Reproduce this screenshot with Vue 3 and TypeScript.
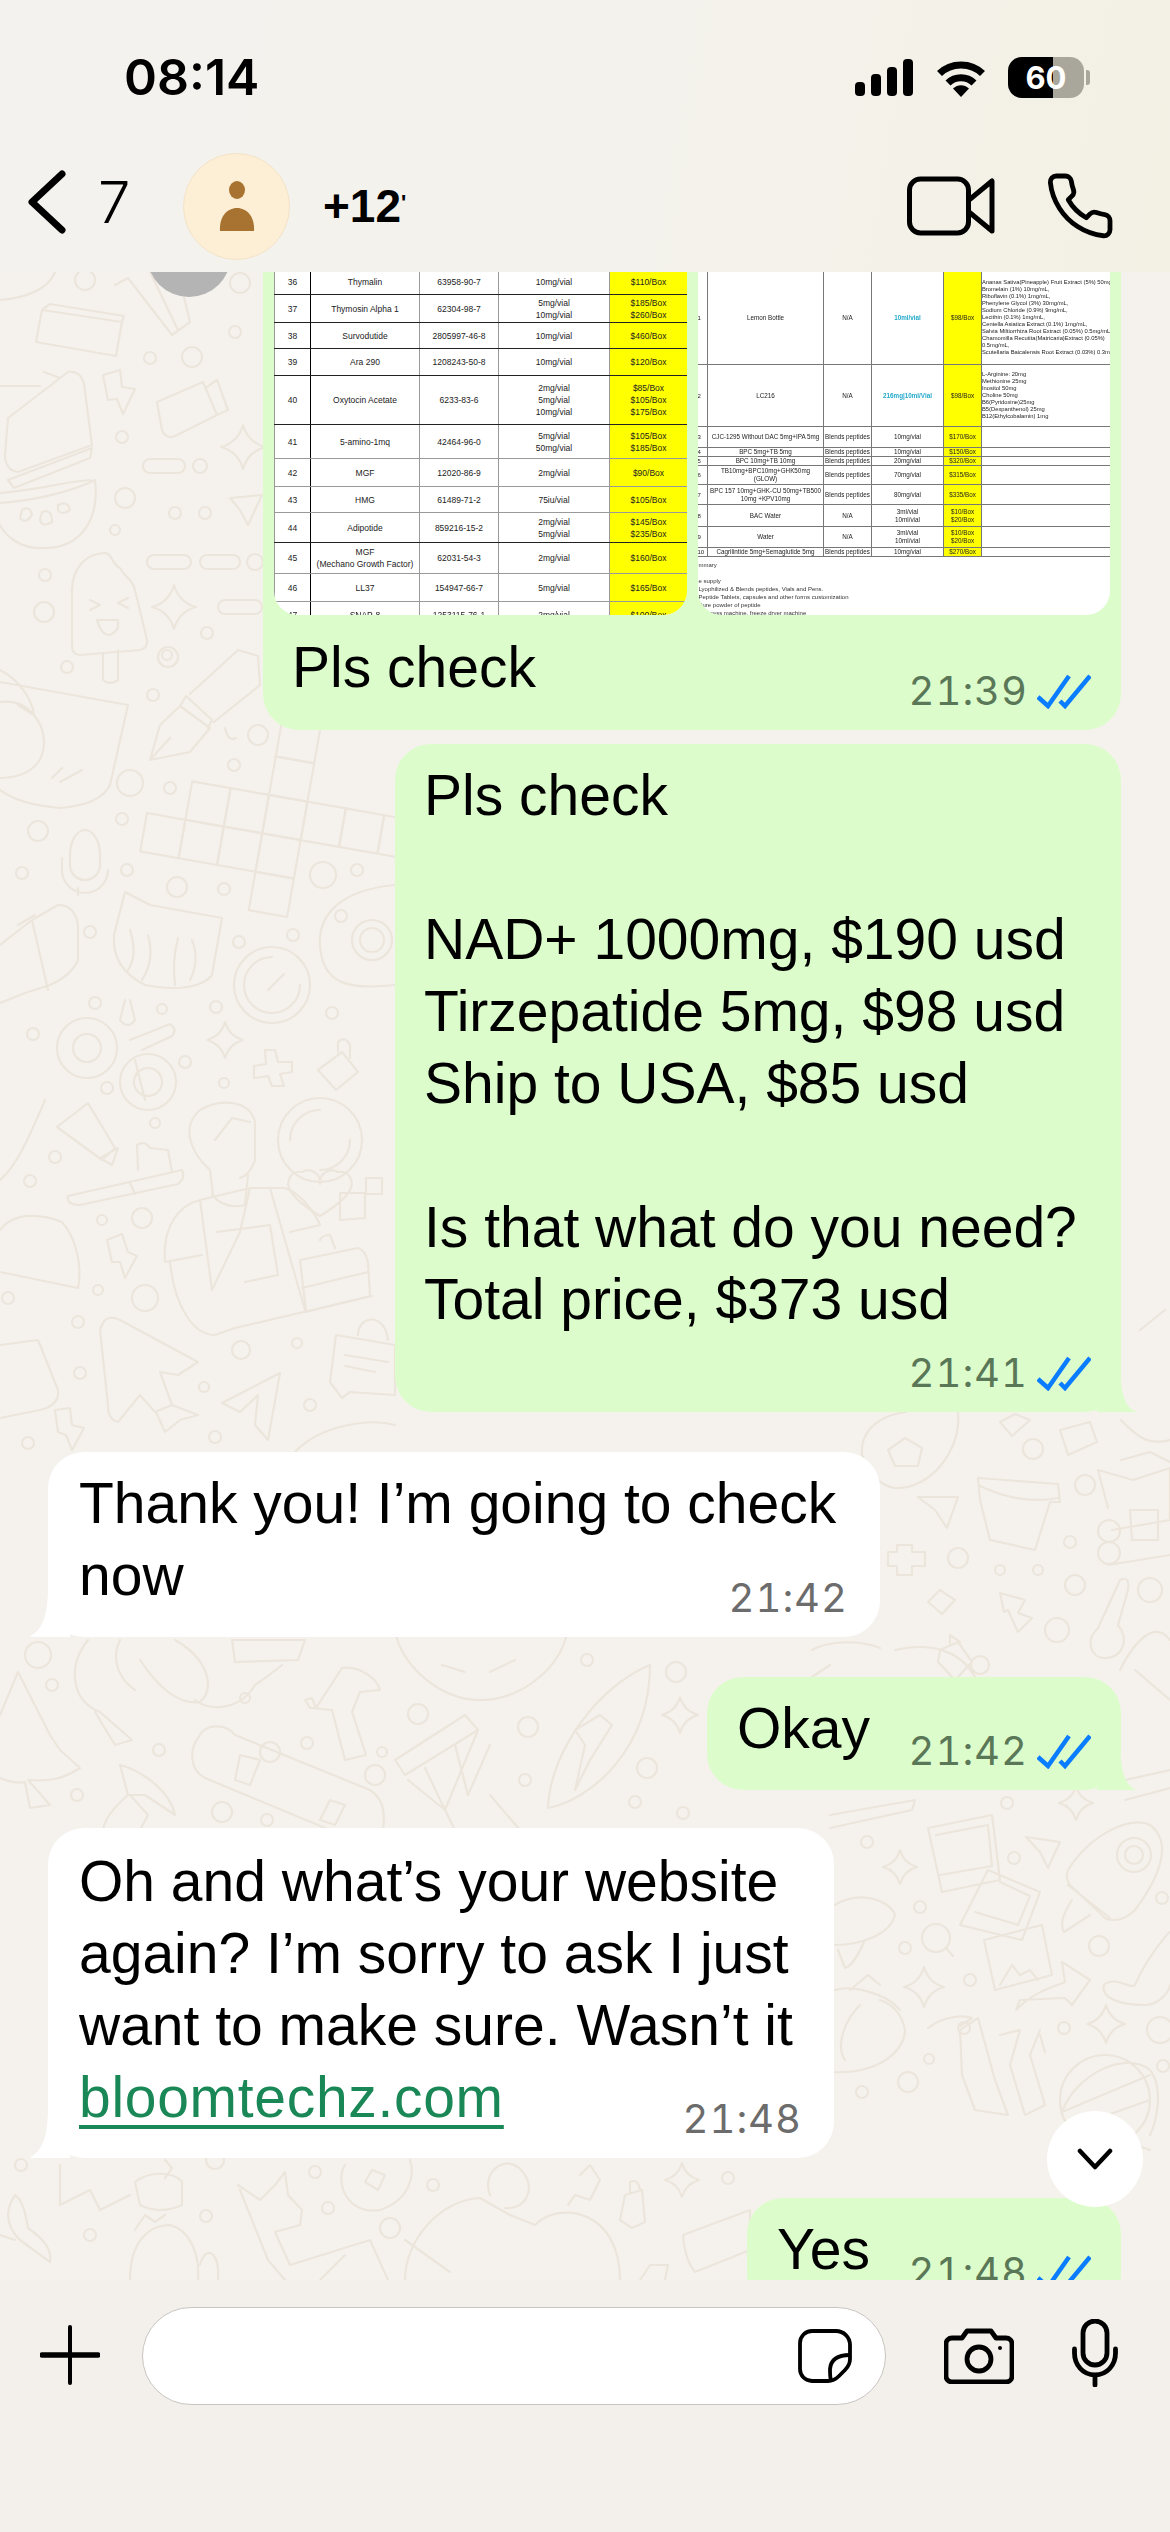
<script setup lang="ts">
interface PriceRow {
  no: string;
  name: string[];
  cas: string;
  spec: string[];
  price: string[];
  h: number;
  strong?: boolean;
}

interface BlendRow {
  no: string;
  name: string[];
  type: string;
  spec: string[];
  price: string[];
  note: string[];
  h: number;
  cyan?: boolean;
}

const leftRows: PriceRow[] = [
  { no: '36', name: ['Thymalin'], cas: '63958-90-7', spec: ['10mg/vial'], price: ['$110/Box'], h: 26, strong: true },
  { no: '37', name: ['Thymosin Alpha 1'], cas: '62304-98-7', spec: ['5mg/vial', '10mg/vial'], price: ['$185/Box', '$260/Box'], h: 28, strong: true },
  { no: '38', name: ['Survodutide'], cas: '2805997-46-8', spec: ['10mg/vial'], price: ['$460/Box'], h: 26, strong: true },
  { no: '39', name: ['Ara 290'], cas: '1208243-50-8', spec: ['10mg/vial'], price: ['$120/Box'], h: 27, strong: true },
  { no: '40', name: ['Oxytocin Acetate'], cas: '6233-83-6', spec: ['2mg/vial', '5mg/vial', '10mg/vial'], price: ['$85/Box', '$105/Box', '$175/Box'], h: 49, strong: true },
  { no: '41', name: ['5-amino-1mq'], cas: '42464-96-0', spec: ['5mg/vial', '50mg/vial'], price: ['$105/Box', '$185/Box'], h: 34 },
  { no: '42', name: ['MGF'], cas: '12020-86-9', spec: ['2mg/vial'], price: ['$90/Box'], h: 28 },
  { no: '43', name: ['HMG'], cas: '61489-71-2', spec: ['75iu/vial'], price: ['$105/Box'], h: 26 },
  { no: '44', name: ['Adipotide'], cas: '859216-15-2', spec: ['2mg/vial', '5mg/vial'], price: ['$145/Box', '$235/Box'], h: 30, strong: true },
  { no: '45', name: ['MGF', '(Mechano Growth Factor)'], cas: '62031-54-3', spec: ['2mg/vial'], price: ['$160/Box'], h: 31 },
  { no: '46', name: ['LL37'], cas: '154947-66-7', spec: ['5mg/vial'], price: ['$165/Box'], h: 28 },
  { no: '47', name: ['SNAP-8'], cas: '1253115-76-1', spec: ['2mg/vial'], price: ['$100/Box'], h: 26 }
];

const rightRows: BlendRow[] = [
  {
    no: '1', name: ['Lemon  Bottle'], type: 'N/A', spec: ['10ml/vial'], price: ['$98/Box'], h: 94, cyan: true,
    note: ['Ananas Sativa(Pineapple) Fruit Extract (5%) 50mg/ml,', 'Bromelain (1%) 10mg/mL,', 'Riboflavin (0.1%) 1mg/mL,', 'Phenylene Glycol (3%) 30mg/mL,', 'Sodium Chloride (0.9%) 9mg/mL,', 'Lecithin (0.1%) 1mg/mL,', 'Centella Asiatica Extract (0.1%) 1mg/mL,', 'Salvia Miltiorrhiza Root Extract (0.05%) 0.5mg/mL,', 'Chamomilla Recutita(Matricaria)Extract (0.05%)', '0.5mg/mL,', 'Scutellaria Baicalensis Root Extract (0.03%) 0.3mg/ml']
  },
  {
    no: '2', name: ['LC216'], type: 'N/A', spec: ['216mg|10ml/Vial'], price: ['$98/Box'], h: 62, cyan: true,
    note: ['L-Arginine: 20mg', 'Methionine 25mg', 'Inositol 50mg', 'Choline 50mg', 'B6(Pyridoxine)25mg', 'B5(Dexpanthenol) 25mg', 'B12(Ethylcobalamin) 1mg']
  },
  { no: '3', name: ['CJC-1295 Without DAC 5mg+IPA 5mg'], type: 'Blends peptides', spec: ['10mg/vial'], price: ['$170/Box'], note: [], h: 21 },
  { no: '4', name: ['BPC 5mg+TB 5mg'], type: 'Blends peptides', spec: ['10mg/vial'], price: ['$150/Box'], note: [], h: 8 },
  { no: '5', name: ['BPC 10mg+TB 10mg'], type: 'Blends peptides', spec: ['20mg/vial'], price: ['$320/Box'], note: [], h: 8 },
  { no: '6', name: ['TB10mg+BPC10mg+GHK50mg', '(GLOW)'], type: 'Blends peptides', spec: ['70mg/vial'], price: ['$315/Box'], note: [], h: 19 },
  { no: '7', name: ['BPC 157 10mg+GHK-CU 50mg+TB500', '10mg +KPV10mg'], type: 'Blends peptides', spec: ['80mg/vial'], price: ['$335/Box'], note: [], h: 20 },
  { no: '8', name: ['BAC Water'], type: 'N/A', spec: ['3ml/vial', '10ml/vial'], price: ['$10/Box', '$20/Box'], note: [], h: 22 },
  { no: '9', name: ['Water'], type: 'N/A', spec: ['3ml/vial', '10ml/vial'], price: ['$10/Box', '$20/Box'], note: [], h: 21 },
  { no: '10', name: ['Cagrilintide 5mg+Semaglutide 5mg'], type: 'Blends peptides', spec: ['10mg/vial'], price: ['$270/Box'], note: [], h: 8 }
];

const summary = [
  'mmary',
  '',
  'e supply',
  'Lyophilized & Blends peptides, Vials and Pens.',
  'Peptide Tablets, capsules and other forms customization',
  'Pure powder of peptide',
  '   * press machine, freeze dryer machine'
];

const star = (x: number, y: number, r: number) => {
  const c = r * 0.22;
  return `M${x} ${y - r}Q${x + c} ${y - c} ${x + r} ${y}Q${x + c} ${y + c} ${x} ${y + r}Q${x - c} ${y + c} ${x - r} ${y}Q${x - c} ${y - c} ${x} ${y - r}Z`;
};

const pill = (x: number, y: number, w: number, h: number) => {
  const r = h / 2;
  return `M${x + r} ${y}H${x + w - r}a${r} ${r} 0 0 1 0 ${h}H${x + r}a${r} ${r} 0 0 1 0 ${-h}Z`;
};

// crossword squares, in column / row steps
const crossCells = [[1, -1], [2, -1], [3, -1], [4, -1], [5, -1], [6, -1], [0, 0], [1, 0], [2, 0], [3, 0], [3, 1], [3, -2], [3, -3]];

const doodles: string[] = [
  // top left column
  'M0 300C25 298 48 290 55 272',
  'M115 285L128 278L172 335L190 322L178 272M150 272L178 330',
  'M42 310L122 322L116 356L36 342ZM42 310L50 304L124 316L122 322',
  'M8 418L68 372Q80 370 84 384L92 445L18 472Q5 470 5 455ZM8 480L92 448L90 458L14 488ZM0 386H40M44 372L60 378',
  'M103 375L120 370L122 387L135 389L123 414L117 399L108 400Z',
  'M157 402L203 382L217 415L173 437Q165 438 162 430ZM207 387L217 380L228 410L217 415',
  star(243, 447, 22),
  pill(143, 459, 42, 14),
  'M0 503C40 500 75 490 95 480C100 520 80 548 45 548C20 550 5 535 0 525M0 493C35 490 65 482 90 480',
  'M22 510Q30 505 32 515Q25 525 20 518ZM42 512Q52 508 52 522Q42 528 40 520ZM58 505Q68 500 70 510Q62 516 58 510Z',
  'M230 498L262 495L248 525L240 510Z',
  pill(147, 555, 44, 14),
  pill(200, 555, 40, 14),
  pill(218, 600, 44, 14),
  'M72 590C72 570 85 553 105 553C112 553 112 565 120 568C125 578 132 578 135 590L147 640Q148 648 140 650L80 655Q72 655 72 645Z',
  'M103 654V680Q110 686 118 680V650M97 620H118V628Q108 642 100 628ZM90 600L100 605L90 610M128 598L118 603L128 608',
  star(174, 607, 22),
  'M0 670C20 680 32 700 34 715L18 705',
  'M0 682L128 705L110 785Q100 805 60 808Q20 805 0 790',
  'M0 702C30 698 45 725 44 745C42 770 20 778 0 778M52 778L62 768M60 782L82 770',
  'M150 760L160 725L180 706L210 728L190 752ZM150 760L170 738M180 706L186 696L212 720L208 728M190 694L238 650L258 656L260 685L214 722',
  'M225 728Q228 742 236 738',
  // camera, cat, gauge
  'M320 945C318 915 340 890 395 885M395 985C350 990 322 985 320 945',
  'M125 892L150 905L222 918L212 975C200 990 170 990 145 985C125 975 112 960 114 935Z',
  'M130 930Q138 955 128 970M148 935Q155 960 142 980M178 938Q172 960 175 985M192 940Q200 960 190 980',
  'M32 920L58 905Q75 905 78 925L78 960Q72 975 50 985L25 993L0 1003M0 945L32 920L48 990M18 925L35 915',
  'M85 830a15 25 0 0 1 15 25v10a15 15 0 0 1-30 0v-10a15 25 0 0 1 15-25ZM62 858V870A23 23 0 0 0 108 870M78 888V895',
  'M125 1000L120 1020Q128 1030 135 1020L130 1000M130 1040L170 1024Q178 1030 172 1036L142 1050M135 1060L145 1100',
  star(225, 1040, 18),
  'M265 1050H275L278 1062H292V1072L280 1074L284 1086H272L268 1076L254 1078V1066L266 1064Z',
  'M318 1070L342 1052L358 1072L336 1090ZM338 1052V1042Q345 1035 350 1045V1058',
  // reading man and neighbours
  'M0 1180C18 1165 32 1130 45 1100',
  'M57 1127L88 1103L115 1148L102 1160ZM100 1158L118 1148L112 1165Z',
  'M68 1196L182 1170Q186 1178 178 1184L80 1205Q66 1205 68 1196ZM130 1183L135 1194',
  'M138 1170L137 1145Q145 1140 150 1148L168 1150L172 1172',
  'M210 1170C188 1150 182 1125 200 1110C220 1098 250 1100 255 1122L255 1160Q250 1175 240 1178M215 1140L232 1118L250 1122M212 1195Q225 1210 245 1205L248 1175M210 1170L213 1195',
  'M165 1262C162 1225 180 1205 200 1200L250 1188H285C305 1195 318 1220 320 1225L290 1232M165 1262L202 1255M170 1262C175 1310 195 1335 215 1335L235 1328L372 1296',
  'M200 1200L212 1290L240 1232L250 1188M270 1188L305 1310',
  'M217 1232L270 1225L278 1275L245 1282',
  'M300 1260L358 1248Q365 1250 368 1262L370 1296L306 1312ZM302 1288L368 1272M320 1240Q322 1235 330 1235L335 1248',
  'M0 1230C15 1210 45 1215 62 1222C78 1240 82 1270 78 1288L0 1272',
  'M107 1240L122 1234L128 1252L137 1256L125 1278L120 1262L112 1262Z',
  'M100 1330Q105 1312 120 1320L198 1362L178 1375L160 1372L172 1405L155 1412L140 1395L118 1422Q108 1420 108 1405Z',
  'M156 1412L165 1432L180 1420L198 1415L172 1405',
  'M222 1403L280 1373L268 1440L255 1425L258 1395L240 1412Z',
  'M336 1335L395 1345V1395L350 1392L342 1398L330 1382ZM345 1355L388 1362M345 1366L375 1372M358 1335C358 1315 385 1312 388 1340',
  'M0 1345L38 1340L58 1390Q60 1405 40 1410L0 1418',
  'M55 1410L70 1408L72 1425L84 1428L72 1450L66 1435L58 1432Z',
  'M295 1452C320 1425 370 1418 395 1425',
  // plate with heart
  'M320 1184a12 12 0 0 0 -18 -12q-12 -2 -14 12q2 14 32 32q30 -18 32 -32q-2 -14 -14 -12a12 12 0 0 0 -18 12Z',
  'M340 1193H365V1218L340 1220ZM366 1178H382V1194H366Z',
  // gap right of the incoming bubble
  'M1121 1420C1140 1440 1150 1445 1170 1440M1121 1460L1150 1452L1170 1462M1140 1330L1165 1310',
  'M862 1455C860 1430 880 1415 906 1412M958 1412C962 1450 930 1490 895 1488C880 1486 870 1475 862 1455',
  'M888 1450L905 1438L922 1448L918 1466H895Z',
  'M1000 1422L1015 1414L1030 1420L1012 1436Z',
  'M1060 1430L1090 1422L1097 1442L1068 1455Z',
  'M918 1497L958 1497L947 1528L935 1510Z',
  'M978 1478L1058 1484L1060 1502L1050 1502L1035 1550L990 1540L980 1500ZM980 1486Q1020 1505 1058 1498',
  'M1098 1470L1133 1480L1170 1468L1170 1520L1112 1530M1098 1470L1108 1508M1130 1510H1158V1540H1132Z',
  pill(1098, 1520, 22, 22),
  pill(1098, 1542, 22, 22),
  'M1108 1565L1170 1555',
  'M897 1545H912V1552H925V1566H912V1575H897V1566H888V1552H897Z',
  'M940 1590L955 1600L942 1614L928 1602Z',
  'M1000 1593L1025 1600L1018 1613L1032 1618L1018 1632L1008 1610L1004 1612Z',
  'M1120 1580Q1130 1575 1128 1590L1118 1625C1130 1640 1122 1658 1105 1658C1090 1658 1085 1640 1098 1628Z',
  'M940 1650L958 1642L972 1662L955 1680L938 1662ZM950 1645V1635L960 1642',
  'M812 1650C830 1640 860 1640 880 1648M830 1665L812 1677M895 1650C930 1642 960 1650 975 1677',
  'M1120 1670C1135 1640 1155 1620 1170 1640M1125 1780L1170 1770M1135 1670L1170 1700',
  // gap under "Thank you"
  'M18 1672L50 1735L60 1750L80 1768C65 1778 50 1782 28 1780L50 1805L30 1808L25 1782C15 1784 5 1780 0 1778M18 1672L0 1715',
  'M88 1640C68 1665 70 1700 100 1712L132 1740L115 1745L95 1712M120 1640C110 1660 120 1680 135 1690',
  'M140 1660C160 1690 180 1705 200 1702C215 1690 210 1660 175 1640',
  'M232 1640H305L298 1660L235 1662Z',
  'M195 1700C210 1712 240 1710 255 1685Q270 1675 282 1665',
  'M305 1700L312 1698L316 1708L342 1668C360 1665 378 1680 380 1690L360 1692L352 1712L366 1755L345 1760L332 1710L312 1708L310 1708Z',
  'M200 1735C205 1725 225 1722 235 1735L370 1790C385 1800 385 1815 383 1830M200 1735C188 1750 190 1770 205 1778L330 1830',
  'M240 1755L260 1760L250 1785L235 1780ZM330 1800L345 1805L335 1825L320 1820Z',
  'M120 1765C140 1770 170 1790 175 1815L145 1795L128 1795ZM130 1795L148 1815L140 1830M128 1795Q105 1815 103 1830',
  'M395 1760L465 1715L478 1730L405 1775ZM408 1780L445 1810L478 1730M425 1768L445 1810M455 1745L468 1795L490 1745M445 1810L455 1830M490 1795L520 1830',
  'M650 1665C600 1685 550 1750 548 1808C590 1800 650 1750 650 1665Z',
  'M600 1715L612 1725L590 1760L575 1790L585 1745L575 1730Z',
  star(680, 1715, 18),
  'M395 1630C400 1665 440 1700 480 1700C520 1700 560 1670 568 1630M442 1665L465 1672M490 1672L515 1660',
  // right of the input field
  'M1125 1800L1170 1788M830 1815L915 1800L912 1810L830 1828',
  star(1076, 1803, 17),
  'M928 1828L992 1815L1000 1880L942 1892ZM936 1835L988 1825L992 1866L940 1875',
  'M988 1870L1040 1892L1022 1940L960 1925ZM1000 1882L1030 1896L1018 1925L975 1912',
  'M1026 1837L1060 1842L1048 1868L1040 1852Z',
  'M1068 1870C1090 1835 1130 1815 1150 1825C1170 1840 1165 1870 1135 1910C1120 1925 1105 1920 1102 1915L1070 1885Q1065 1878 1068 1870ZM1068 1885L1110 1918',
  'M1072 1900C1062 1915 1060 1925 1064 1932L1090 1915',
  star(900, 1867, 17),
  'M835 1905C860 1890 890 1900 895 1915C890 1935 860 1945 835 1945M838 1950L845 1968C855 1965 862 1945 865 1940',
  'M984 1940L1042 1925L1052 1975L995 1990ZM1000 1985L1012 1965L1020 1975L1030 1970L1038 1980',
  'M1016 2010C1035 1990 1060 1985 1065 1982L1062 1962L1090 1980L1072 2005L1065 1998L1020 2000L1016 2010Z',
  'M1104 1985C1115 1975 1130 1990 1135 1985C1145 1960 1170 1930 1170 1932M1104 1985C1100 2000 1125 2005 1145 2005C1160 2005 1170 1990 1170 1985',
  star(924, 1987, 20),
  star(1106, 2024, 19),
  'M835 1990C850 1985 885 1992 900 2010M850 1990L868 1975L880 1985M830 2072C880 2075 905 2050 905 2030C902 2015 895 2005 880 2000M860 2005C845 2020 835 2045 845 2060',
  'M960 2030L978 2018L995 2080L1008 2115L975 2110L962 2075ZM928 2028C945 2015 965 2015 972 2018L960 2026',
  'M1000 2035L1020 2030L1010 2065L1025 2115L1045 2105L1030 2055L1040 2030M1040 2035L1045 2052',
  'M1062 2112C1075 2075 1125 2050 1150 2070C1165 2090 1155 2125 1150 2135M1062 2112L1150 2075M1065 2130L1150 2100',
  // gap under the last incoming bubble
  'M60 2165V2205L90 2190L100 2210L130 2195',
  'M135 2182C150 2170 175 2172 182 2182V2205Q160 2215 140 2205Z',
  'M165 2160L172 2168L165 2178',
  'M15 2195C5 2210 5 2225 20 2240L50 2262C52 2250 45 2240 28 2228C25 2210 22 2200 15 2195Z',
  'M0 2235L15 2240',
  'M345 2165C335 2180 345 2215 380 2210C410 2200 415 2175 410 2160',
  'M372 2170L385 2175L378 2190L365 2182Z',
  'M238 2185L260 2200L275 2185L285 2172L288 2195L302 2210L300 2225L275 2232L290 2265L370 2240L388 2280',
  'M240 2190L268 2260L285 2280M320 2280L345 2255',
  'M405 2280C405 2240 440 2200 480 2198L510 2215L535 2225C560 2200 620 2210 620 2280',
  'M490 2195C480 2170 510 2150 525 2175C535 2190 525 2210 505 2208',
  'M405 2240L450 2272',
  'M130 2280C130 2240 150 2225 170 2225C190 2230 200 2255 198 2280M200 2265C205 2245 220 2250 218 2280M135 2230L145 2215L155 2222L165 2215',
  'M580 2175L590 2165L600 2180L590 2200L575 2195L568 2205',
  'M625 2195L642 2190L645 2222L632 2228L620 2220ZM630 2192V2182Q638 2178 640 2190',
  star(682, 2180, 17),
  'M683 2235L750 2210L750 2250L695 2272Q685 2260 683 2235Z',
  'M640 2280L650 2265L668 2265L665 2280',
  'M1121 2140L1150 2150'
];

const dots: [number, number, number][] = [
  [85, 280, 10], [240, 283, 10], [235, 332, 6], [192, 357, 10], [150, 358, 6], [122, 437, 6], [200, 466, 7], [125, 498, 10],
  [175, 513, 6], [205, 513, 6], [115, 530, 5], [255, 562, 8], [45, 575, 6], [44, 612, 10], [207, 633, 6], [168, 657, 10],
  [67, 667, 6], [153, 695, 6], [167, 655, 5], [258, 735, 10], [234, 765, 6], [130, 783, 13], [170, 788, 6],
  [122, 819, 6], [38, 831, 10], [22, 873, 6], [127, 870, 6], [177, 887, 10], [224, 889, 6], [323, 875, 13], [357, 870, 6],
  [90, 932, 6], [239, 942, 6], [293, 935, 6], [95, 1003, 6], [162, 1009, 5], [216, 1007, 6], [332, 1013, 6], [33, 1034, 6],
  [185, 1062, 6], [107, 1088, 6], [224, 1083, 5], [155, 1123, 5], [55, 1157, 6], [30, 1181, 6], [102, 1220, 5], [142, 1218, 10],
  [98, 1290, 5], [145, 1298, 13], [8, 1298, 6], [78, 1322, 6], [241, 1350, 9], [297, 1343, 5], [80, 1373, 6], [204, 1387, 5],
  [310, 1405, 6], [215, 1437, 6], [28, 1443, 6], [1033, 1449, 10], [1085, 1485, 10], [1070, 1542, 6], [958, 1558, 10], [1000, 1570, 5],
  [1038, 1570, 5], [1075, 1585, 10], [1057, 1630, 12], [980, 1665, 9], [1150, 1590, 12], [38, 1655, 13], [52, 1685, 6], [159, 1750, 6],
  [245, 1698, 5], [270, 1752, 10], [307, 1743, 6], [382, 1752, 5], [418, 1714, 10], [528, 1727, 10], [525, 1780, 6], [375, 1775, 10],
  [587, 1660, 6], [676, 1672, 10], [77, 1795, 6], [222, 1812, 10], [267, 1820, 6], [635, 1802, 6], [647, 1768, 10], [683, 1813, 6],
  [1007, 1803, 6], [867, 1842, 6], [1014, 1858, 6], [920, 1907, 6], [905, 1948, 6], [1162, 1898, 6], [970, 1980, 6], [1099, 1946, 10],
  [964, 2028, 6], [1064, 2028, 6], [929, 2059, 5], [908, 2082, 10], [862, 2092, 6], [1163, 2066, 6], [1160, 2030, 13], [21, 2165, 6],
  [215, 2160, 9], [315, 2172, 6], [433, 2185, 6], [328, 2208, 6], [206, 2216, 6], [90, 2235, 6], [728, 2178, 6], [390, 2228, 10]
];
</script>

<template>
  <div class="phone">
    <header class="top">
      <div class="status">
        <span class="clock">08:14</span>
        <div class="status-right">
          <svg width="58" height="37" viewBox="0 0 58 37" fill="#000">
            <rect x="0" y="23" width="10" height="14" rx="4" />
            <rect x="16" y="15" width="10" height="22" rx="4" />
            <rect x="32" y="8" width="10" height="29" rx="4" />
            <rect x="48" y="0" width="10" height="37" rx="4" />
          </svg>
          <svg class="wifi" width="50" height="38" viewBox="0 0 50 38" fill="none" stroke="#000" stroke-width="7">
            <path d="M3.5 14.5C15 3 35 3 46.500 14.500" />
            <path d="M12 24C19 17 31 17 38 24" />
            <path d="M17 29.500C21.500 25 28.500 25 33 29.500L25 38Z" fill="#000" stroke="none" />
          </svg>
          <div class="battery"><span>60</span></div>
          <i class="battery-nub"></i>
        </div>
      </div>
      <div class="nav">
        <svg class="back" width="38" height="64" viewBox="0 0 38 64" fill="none" stroke="#000" stroke-width="7" stroke-linecap="round" stroke-linejoin="round">
          <path d="M34 4L4 32L34 60" />
        </svg>
        <span class="unread">7</span>
        <div class="avatar">
          <svg width="36" height="50" viewBox="0 0 36 50" fill="#a87230">
            <ellipse cx="18" cy="9" rx="8" ry="9" />
            <path d="M1 50C0 36 8 27 18 27S36 36 35 50Z" />
          </svg>
        </div>
        <span class="contact">+12<em>'</em></span>
        <svg class="video" width="88" height="60" viewBox="0 0 88 60" fill="none" stroke="#000" stroke-width="5" stroke-linejoin="round">
          <rect x="2.500" y="3" width="59" height="54" rx="11" />
          <path d="M62 24L85 5V55L62 36" />
        </svg>
        <svg class="call" width="74" height="72" viewBox="0 0 24 24" fill="none" stroke="#000" stroke-width="1.600" stroke-linejoin="round">
          <path d="M22 16.920v3a2 2 0 0 1-2.180 2 19.790 19.790 0 0 1-8.630-3.070 19.500 19.500 0 0 1-6-6 19.790 19.790 0 0 1-3.070-8.670A2 2 0 0 1 4.110 2h3a2 2 0 0 1 2 1.720 12.840 12.840 0 0 0 .7 2.810 2 2 0 0 1-.45 2.110L8.090 9.910a16 16 0 0 0 6 6l1.270-1.270a2 2 0 0 1 2.110-.45 12.840 12.840 0 0 0 2.810.7A2 2 0 0 1 22 16.920z" />
        </svg>
      </div>
    </header>

    <main class="chat">
      <svg class="wallpaper" width="1170" height="2008" viewBox="0 272 1170 2008" fill="none" stroke="#ece5dc" stroke-width="2.200" stroke-linejoin="round" stroke-linecap="round">
        <g transform="translate(147 813) rotate(10)">
          <rect v-for="c in crossCells" :key="c.join()" :x="c[0] * 39" :y="c[1] * 39" width="39" height="39" />
        </g>
        <path v-for="(d, i) in doodles" :key="i" :d="d" />
        <circle v-for="(c, i) in dots" :key="'dot' + i" :cx="c[0]" :cy="c[1]" :r="c[2]" />
        <circle cx="372" cy="940" r="20" /><circle cx="372" cy="940" r="12" /><circle cx="341" cy="916" r="6" />
        <circle cx="272" cy="985" r="38" /><path d="M272 957a28 28 0 1 0 28 28M268 990L284 974" />
        <circle cx="87" cy="1048" r="30" /><circle cx="87" cy="1048" r="14" />
        <circle cx="148" cy="1082" r="28" /><circle cx="148" cy="1082" r="14" />
        <circle cx="320" cy="1140" r="42" /><path d="M290 1140a30 30 0 0 1 30-30M350 1140a30 30 0 0 1-30 30" />
        <circle cx="936" cy="1938" r="14" /><path d="M946 1948L953 1956" />
        <circle cx="1134" cy="1855" r="17" /><circle cx="1134" cy="1855" r="9" />
        <circle cx="1105" cy="2100" r="45" />
      </svg>
      <i class="share-dot"></i>

      <article class="bubble out first">
        <div class="sheets">
          <div class="sheet">
            <table class="left-table">
              <colgroup><col style="width: 36px"><col style="width: 109px"><col style="width: 79px"><col style="width: 111px"><col style="width: 78px"></colgroup>
              <tr v-for="row in leftRows" :key="row.no" :class="{ strong: row.strong }" :style="{ height: row.h + 'px' }">
                <td class="no">{{ row.no }}</td>
                <td><div v-for="t in row.name" :key="t">{{ t }}</div></td>
                <td>{{ row.cas }}</td>
                <td><div v-for="t in row.spec" :key="t">{{ t }}</div></td>
                <td class="yellow"><div v-for="t in row.price" :key="t">{{ t }}</div></td>
              </tr>
            </table>
          </div>
          <div class="sheet">
            <table class="right-table">
              <colgroup><col style="width: 10px"><col style="width: 116px"><col style="width: 48px"><col style="width: 72px"><col style="width: 38px"><col style="width: 129px"></colgroup>
              <tr v-for="row in rightRows" :key="row.no" :style="{ height: row.h + 'px' }">
                <td class="idx">{{ row.no }}</td>
                <td><div v-for="t in row.name" :key="t">{{ t }}</div></td>
                <td>{{ row.type }}</td>
                <td :class="{ cyan: row.cyan }"><div v-for="t in row.spec" :key="t">{{ t }}</div></td>
                <td class="yellow"><div v-for="t in row.price" :key="t">{{ t }}</div></td>
                <td class="note"><div v-for="t in row.note" :key="t">{{ t }}</div></td>
              </tr>
            </table>
            <div class="summary">
              <div v-for="(t, i) in summary" :key="i">{{ t || '&nbsp;' }}</div>
            </div>
          </div>
        </div>
        <p class="caption">Pls check</p>
        <div class="meta">
          <span>21:39</span>
          <svg width="54" height="35" viewBox="0 0 54 35" fill="none" stroke="#0a7cff" stroke-width="4.500"><path d="M1 23L11 32L32 2M23 27L28 32L53 2" /></svg>
        </div>
      </article>

      <article class="bubble out long">
        <p>Pls check</p>
        <p>&nbsp;</p>
        <p>NAD+ 1000mg, $190 usd</p>
        <p>Tirzepatide 5mg, $98 usd</p>
        <p>Ship to USA, $85 usd</p>
        <p>&nbsp;</p>
        <p>Is that what do you need?</p>
        <p>Total price, $373 usd</p>
        <div class="meta">
          <span>21:41</span>
          <svg width="54" height="35" viewBox="0 0 54 35" fill="none" stroke="#0a7cff" stroke-width="4.500"><path d="M1 23L11 32L32 2M23 27L28 32L53 2" /></svg>
        </div>
        <svg class="tail" width="40" height="32" viewBox="0 0 40 32"><path d="M0 32H40C32 30 25 20 24 0H0Z" /></svg>
      </article>

      <article class="bubble in thanks">
        <p>Thank you! I’m going to check</p>
        <p>now</p>
        <div class="meta"><span>21:42</span></div>
        <svg class="tail" width="40" height="50" viewBox="0 0 40 50"><path d="M40 50H12C4 50 0 50 0 49C12 44 18 28 18 0H40Z" /></svg>
      </article>

      <article class="bubble out okay">
        <p>Okay</p>
        <div class="meta">
          <span>21:42</span>
          <svg width="54" height="35" viewBox="0 0 54 35" fill="none" stroke="#0a7cff" stroke-width="4.500"><path d="M1 23L11 32L32 2M23 27L28 32L53 2" /></svg>
        </div>
        <svg class="tail" width="40" height="32" viewBox="0 0 40 32"><path d="M0 32H40C32 30 25 20 24 0H0Z" /></svg>
      </article>

      <article class="bubble in website">
        <p>Oh and what’s your website</p>
        <p>again? I’m sorry to ask I just</p>
        <p>want to make sure. Wasn’t it</p>
        <p class="link">bloomtechz.com</p>
        <div class="meta"><span>21:48</span></div>
        <svg class="tail" width="40" height="50" viewBox="0 0 40 50"><path d="M40 50H12C4 50 0 50 0 49C12 44 18 28 18 0H40Z" /></svg>
      </article>

      <article class="bubble out yes">
        <p>Yes</p>
        <div class="meta">
          <span>21:48</span>
          <svg width="54" height="35" viewBox="0 0 54 35" fill="none" stroke="#0a7cff" stroke-width="4.500"><path d="M1 23L11 32L32 2M23 27L28 32L53 2" /></svg>
        </div>
      </article>

      <button class="to-bottom" type="button">
        <svg width="36" height="22" viewBox="0 0 36 22" fill="none" stroke="#000" stroke-width="4.500" stroke-linecap="round" stroke-linejoin="round"><path d="M3 3L18 19L33 3" /></svg>
      </button>
    </main>

    <footer class="composer">
      <svg class="plus" width="60" height="60" viewBox="0 0 60 60" stroke="#000" stroke-linecap="round"><path d="M30 2V58" stroke-width="4" /><path d="M2 30H58" stroke-width="5.500" /></svg>
      <div class="field">
        <svg width="54" height="54" viewBox="0 0 54 54" fill="none" stroke="#000" stroke-width="3.800" stroke-linejoin="round">
          <path d="M14 2H38A14 14 0 0 1 52 16V30C52 34 50 38 47 41L41 47C38 50 35 52 30 52H14A12 12 0 0 1 2 40V14A12 12 0 0 1 14 2Z" />
          <path d="M52 26C44 26 33 28 32 40C32 44 32 48 33 52" />
        </svg>
      </div>
      <svg class="camera" width="70" height="56" viewBox="0 0 70 56" fill="none" stroke="#000" stroke-width="4.800" stroke-linejoin="round">
        <path d="M8 10H18L23 3H47L52 10H62A6 6 0 0 1 68 16V48A6 6 0 0 1 62 54H8A6 6 0 0 1 2 48V16A6 6 0 0 1 8 10Z" />
        <circle cx="35" cy="31" r="12" />
        <circle cx="56" cy="20" r="2" fill="#000" stroke="none" />
      </svg>
      <svg class="mic" width="46" height="68" viewBox="0 0 46 68" fill="none" stroke="#000" stroke-width="4.800" stroke-linecap="round">
        <rect x="11" y="2" width="24" height="44" rx="12" />
        <path d="M2.500 30V34C2.500 46 11 56 23 56S43.500 46 43.500 34V30M23 56V66" />
      </svg>
    </footer>
  </div>
</template>

<style scoped>
.phone {
  width: 1170px;
  height: 2532px;
  display: flex;
  flex-direction: column;
  overflow: hidden;
  color: #000;
  font-family: "Liberation Sans", Arial, sans-serif;
}

.top {
  height: 272px;
  flex: none;
  padding-top: 57px;
  box-sizing: border-box;
  background: linear-gradient(100deg, #f4f2ee 0%, #f4f2ec 55%, #f3f1e4 100%);
}

.status {
  height: 41px;
  display: flex;
  align-items: center;
  justify-content: space-between;
  padding: 0 80px 0 124px;
}

.clock {
  font-family: Inter, sans-serif;
  font-size: 50px;
  font-weight: 600;
  letter-spacing: 0;
  line-height: 41px;
}

.status-right {
  display: flex;
  align-items: center;
}

.wifi {
  margin-left: 23px;
}

.battery {
  width: 76px;
  height: 41px;
  margin-left: 22px;
  border-radius: 14px;
  background: linear-gradient(90deg, #000 59%, #a9a79c 59%);
  color: #fff;
  font-family: Inter, sans-serif;
  font-size: 31px;
  font-weight: 700;
  line-height: 41px;
  text-align: center;
}

.battery-nub {
  width: 4px;
  height: 15px;
  margin-left: 2px;
  border-radius: 0 3px 3px 0;
  background: #a9a79c;
}

.nav {
  height: 108px;
  margin-top: 54px;
  padding-left: 28px;
  display: flex;
  align-items: center;
}

.back {
  margin-top: -8px;
}

.unread {
  margin: -8px 0 0 32px;
  font-size: 58px;
  line-height: 64px;
  width: 86px;
  font-family: Inter, sans-serif;
  font-weight: 300;
}

.avatar {
  width: 107px;
  height: 107px;
  margin-left: -1px;
  box-sizing: border-box;
  border: 1px solid #f3e3c8;
  border-radius: 50%;
  background: #fdeed6;
  display: flex;
  align-items: center;
  justify-content: center;
}

.contact {
  margin-left: 33px;
  font-size: 46px;
  font-weight: 700;
  width: 584px;
}

.contact em {
  font-style: normal;
  font-size: 22px;
  vertical-align: 12px;
}

.call {
  margin-left: 48px;
}

.chat {
  position: relative;
  height: 2008px;
  flex: none;
  overflow: hidden;
  background: #f5f2ed;
  display: flex;
  flex-direction: column;
}

.wallpaper {
  position: absolute;
  inset: 0;
}

.share-dot {
  position: absolute;
  left: 147px;
  top: -59px;
  width: 84px;
  height: 84px;
  border-radius: 50%;
  background: #b4b4b4;
}

.bubble {
  position: relative;
  flex: none;
  box-sizing: border-box;
  border-radius: 36px;
  font-size: 57px;
  line-height: 72px;
}

.bubble p {
  margin: 0;
  white-space: nowrap;
}

.out {
  align-self: flex-end;
  margin-right: 49px;
  background: #dcfdcb;
}

.in {
  align-self: flex-start;
  margin-left: 48px;
  background: #fff;
}

.first {
  width: 858px;
  height: 458px;
  border-radius: 0 0 36px 36px;
  padding: 0 11px;
}

.sheets {
  display: flex;
  gap: 11px;
  height: 343px;
  filter: blur(0.3px);
}

.sheet {
  width: 413px;
  height: 343px;
  overflow: hidden;
  background: #fff;
  border-radius: 0 0 24px 24px;
}

table {
  border-collapse: collapse;
  table-layout: fixed;
  width: 413px;
  font-family: "Liberation Sans", Arial, sans-serif;
  color: #222;
  text-align: center;
}

td {
  padding: 0;
  overflow: hidden;
  white-space: nowrap;
}

.left-table {
  margin-top: -4px;
  font-size: 8.500px;
  line-height: 12px;
}

.left-table td {
  border: 1px solid #999;
}

.left-table .strong td {
  border-top-color: #222;
  border-bottom-color: #222;
}

.left-table .no {
  border-right: 1px solid #000;
}

.yellow {
  background: #ff0;
}

.right-table {
  margin-top: -2px;
  font-size: 6.300px;
  line-height: 8px;
}

.right-table td {
  border: 1px solid #777;
}

.right-table .idx {
  border-left: 0;
  text-align: left;
  font-size: 6px;
}

.right-table .note {
  border-right: 0;
  text-align: left;
  font-size: 5.800px;
  line-height: 7px;
}

.cyan {
  color: #23a9c9;
  font-weight: 700;
}

.summary {
  padding: 4px 0 0 1px;
  font-size: 6px;
  line-height: 8px;
  color: #333;
  white-space: pre;
}

.caption {
  padding: 16px 0 0 18px;
}

.meta {
  position: absolute;
  right: 30px;
  bottom: 19px;
  height: 40px;
  display: flex;
  align-items: center;
  gap: 9px;
  color: #5a7757;
  font-family: Inter, sans-serif;
  font-size: 40px;
  font-variant-numeric: tabular-nums;
  line-height: 40px;
  letter-spacing: 1px;
}

.in .meta {
  right: 32px;
  color: #6c6c6c;
}

.tail {
  position: absolute;
  bottom: 0;
}

.out .tail {
  right: -16px;
  fill: #dcfdcb;
}

.in .tail {
  left: -18px;
  fill: #fff;
}

.long {
  width: 726px;
  height: 668px;
  margin-top: 14px;
  padding: 15px 0 0 29px;
}

.thanks {
  width: 832px;
  height: 185px;
  margin-top: 40px;
  padding: 15px 0 0 31px;
}

.okay {
  width: 414px;
  height: 113px;
  margin-top: 40px;
  padding: 15px 0 0 30px;
}

.website {
  width: 786px;
  height: 330px;
  margin-top: 38px;
  padding: 17px 0 0 31px;
}

.link {
  color: #1a8756;
  letter-spacing: 0.700px;
  text-decoration: underline;
  text-decoration-thickness: 4px;
  text-underline-offset: 8px;
}

.yes {
  width: 374px;
  height: 113px;
  margin-top: 40px;
  padding: 15px 0 0 30px;
}

.to-bottom {
  position: absolute;
  left: 1047px;
  top: 1839px;
  width: 96px;
  height: 96px;
  padding: 0;
  border: 0;
  border-radius: 50%;
  background: #fff;
  display: flex;
  align-items: center;
  justify-content: center;
}

.composer {
  flex: 1;
  box-sizing: border-box;
  padding: 27px 52px 0 40px;
  background: #f3f0eb;
  display: flex;
  align-items: flex-start;
}

.plus {
  margin-top: 18px;
}

.field {
  width: 744px;
  height: 98px;
  margin-left: 42px;
  box-sizing: border-box;
  border: 1.500px solid #c8c5c1;
  border-radius: 49px;
  background: #fff;
  display: flex;
  align-items: center;
  justify-content: flex-end;
  padding-right: 33px;
}

.camera {
  margin: 21px 0 0 58px;
}

.mic {
  margin: 12px 0 0 58px;
}
</style>
